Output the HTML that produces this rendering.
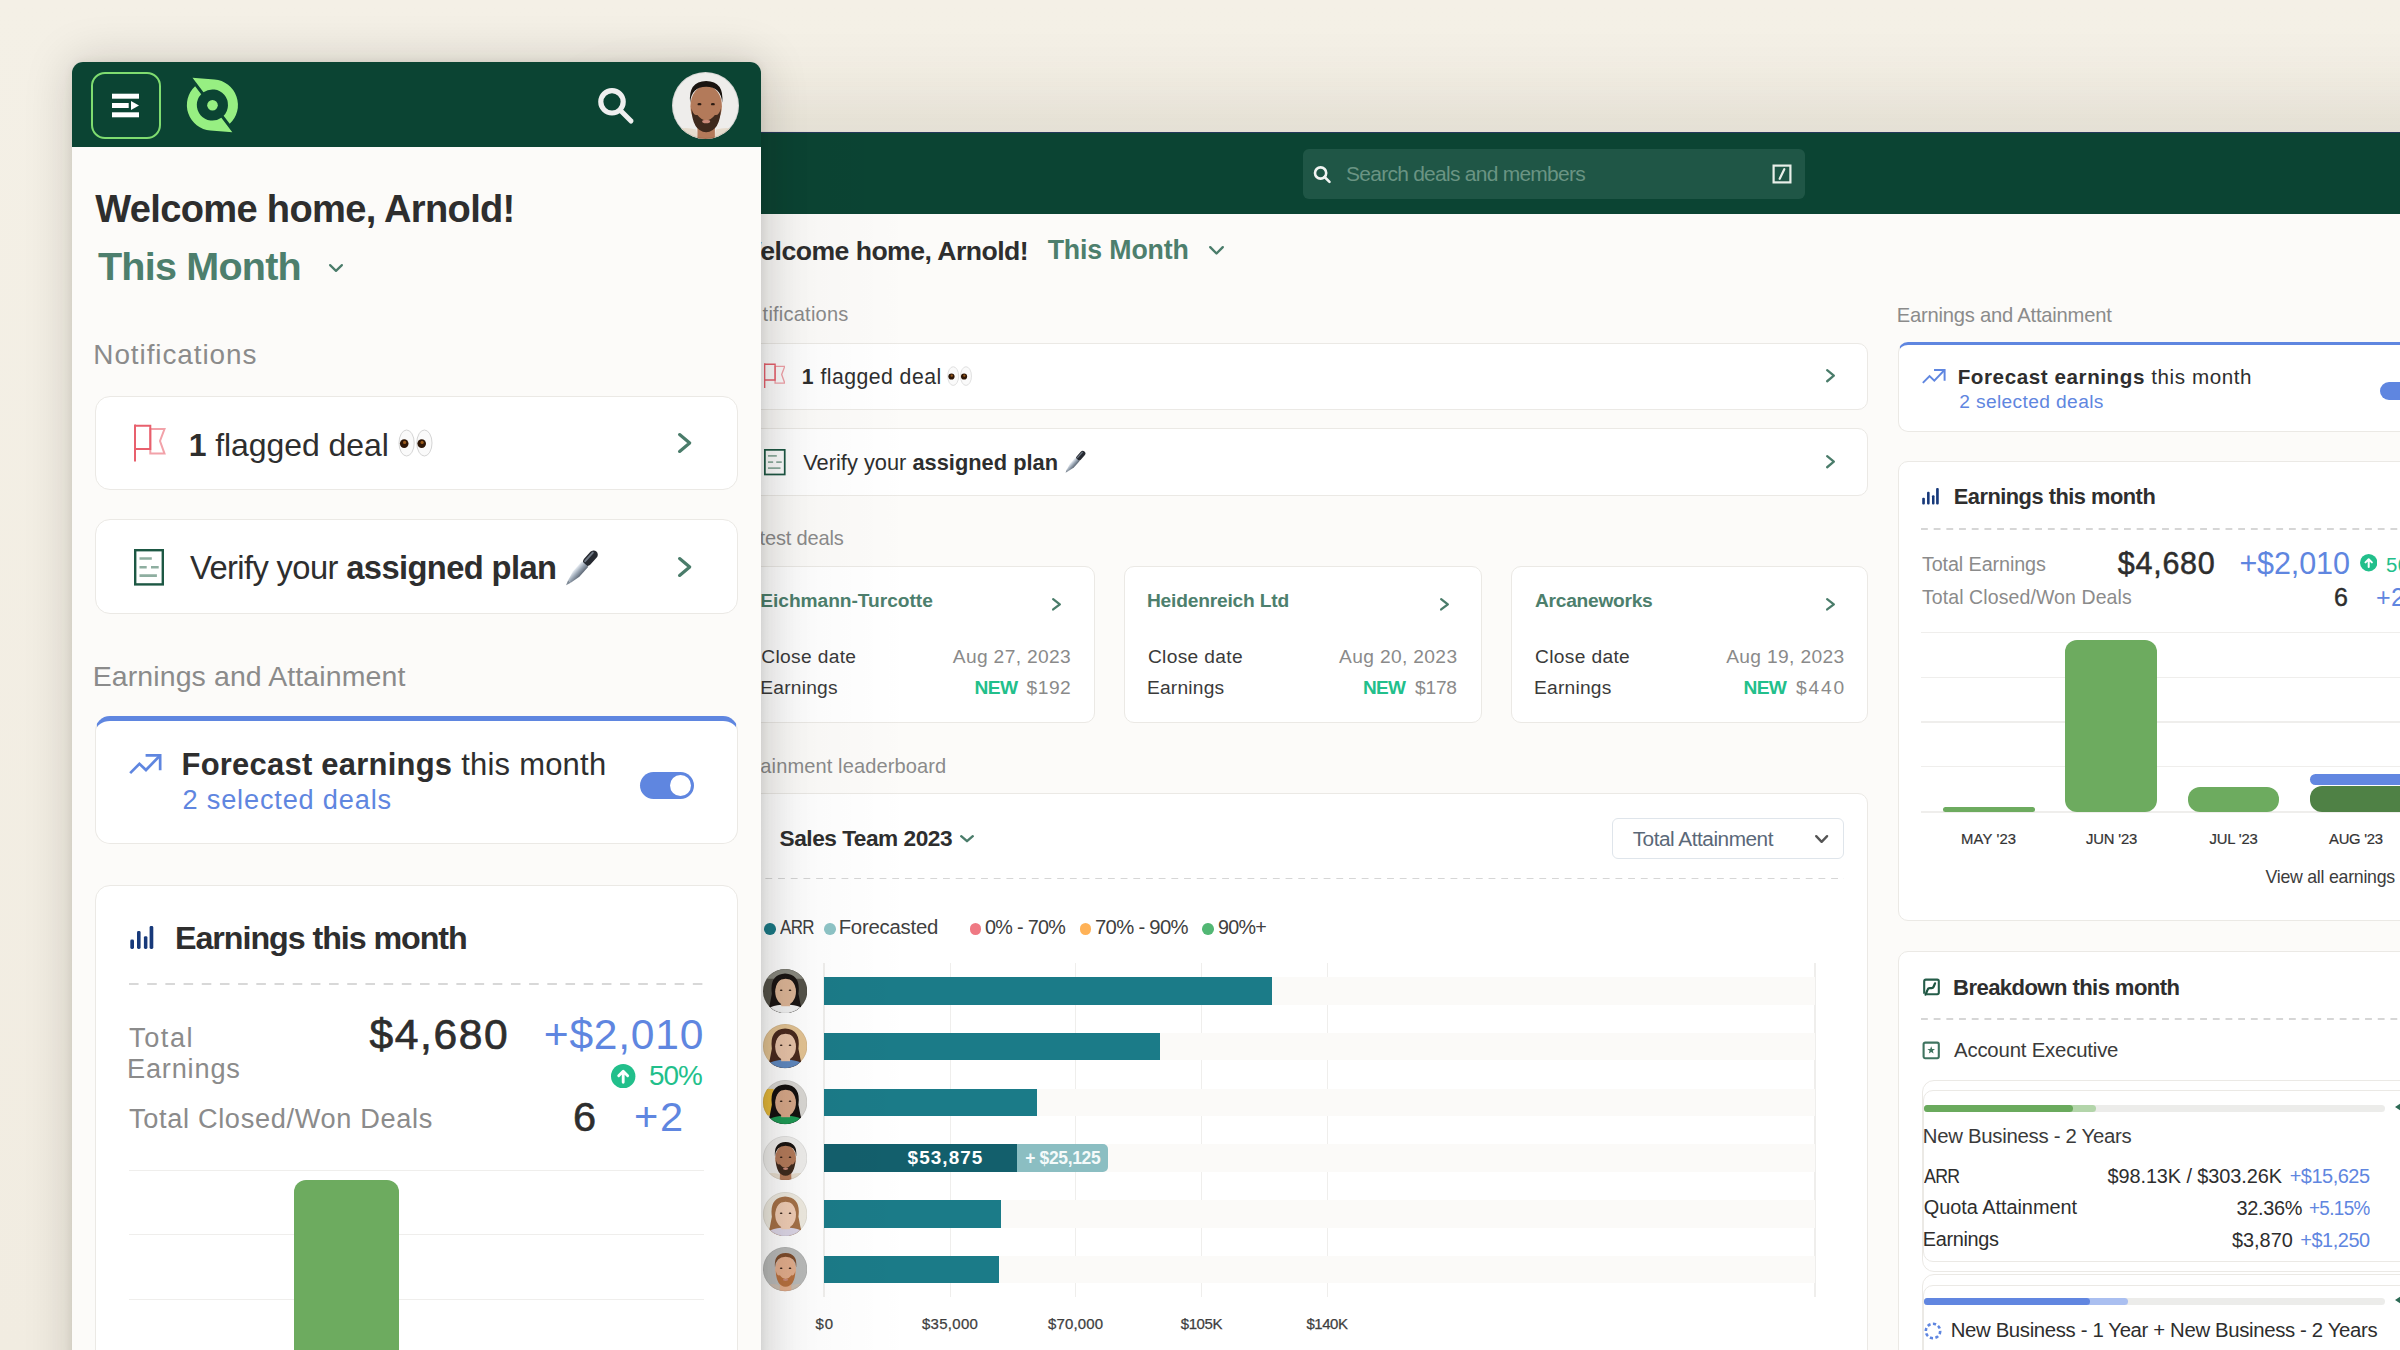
<!DOCTYPE html>
<html><head><meta charset="utf-8">
<style>
html,body{margin:0;padding:0}
body{width:2400px;height:1350px;overflow:hidden;position:relative;background:#f1ece2;font-family:"Liberation Sans",sans-serif}
.abs{position:absolute;display:block}
.t{position:absolute;white-space:nowrap;line-height:1}
.t b{font-weight:700}
#bg{position:absolute;left:0;top:0;width:2400px;height:1350px;background:linear-gradient(180deg,#f4f0e6 0%,#f1ece1 100%)}
#desk{position:absolute;left:0;top:0;width:2400px;height:1350px;overflow:hidden}
#mob{position:absolute;left:0;top:0;width:2400px;height:1350px;overflow:hidden}
</style></head><body>
<div id="bg"></div>
<div id="desk">
<div class="abs" style="left:600.00px;top:131.60px;width:2000.00px;height:82.60px;background:#0b4433;border-top:1px solid #23385a;box-sizing:border-box;box-shadow:0 -14px 90px rgba(70,55,30,0.15)"></div>
<div class="abs" style="left:600.00px;top:214.20px;width:2000.00px;height:1135.80px;background:#fcfbf9"></div>
<div class="abs" style="left:1303.00px;top:148.50px;width:502.00px;height:50.10px;background:#1f5646;border-radius:6px"></div>
<svg class="abs" style="left:1312px;top:164px;width:22px;height:22px" viewBox="0 0 22 22"><circle cx="8.6" cy="9" r="5.6" fill="none" stroke="#f2f5f3" stroke-width="2.6"/><path d="M12.6 13 L17.5 17.9" stroke="#f2f5f3" stroke-width="2.6" stroke-linecap="round"/></svg>
<svg class="abs" style="left:1772px;top:164px;width:20px;height:20px" viewBox="0 0 20 20"><rect x="1.6" y="1.6" width="16.8" height="16.8" fill="none" stroke="#e9efe9" stroke-width="2.2"/><path d="M12.3 5.2 L7.7 14.8" stroke="#e9efe9" stroke-width="2.2" stroke-linecap="round"/></svg>
<svg class="abs" style="left:1206px;top:243px;width:21px;height:14.699999999999989px;overflow:visible" viewBox="-3 -3 21 14.699999999999989"><path d="M1.2 1.2 L7.5 7.4999999999999885 L13.8 1.2" fill="none" stroke="#4a7c6a" stroke-width="2.4" stroke-linecap="round" stroke-linejoin="round"/></svg>
<div class="abs" style="left:700.00px;top:342.70px;width:1168.00px;height:66.90px;background:#fff;border:1.5px solid #ebe9e5;box-sizing:border-box;border-radius:10px"></div>
<div class="abs" style="left:700.00px;top:428.30px;width:1168.00px;height:67.30px;background:#fff;border:1.5px solid #ebe9e5;box-sizing:border-box;border-radius:10px"></div>
<svg class="abs" style="left:763.5px;top:362.5px;width:21.76px;height:25.840000000000003px" viewBox="0 0 32 38">
<path d="M16.3 5 H30.5 L26 17 L30.5 29.6 H16.3 Z" fill="none" stroke="#f2a2a9" stroke-width="2"/>
<path d="M1 1.8 H16.3 V25 H1" fill="none" stroke="#e8606d" stroke-width="2"/>
<path d="M1 0.5 V37.5" stroke="#e8606d" stroke-width="2"/>
</svg>
<svg class="abs" style="left:764px;top:449.2px;width:21.599999999999998px;height:26.64px" viewBox="0 0 30 37">
<rect x="1.2" y="1.2" width="27.6" height="34.2" fill="none" stroke="#1d5844" stroke-width="2.4"/>
<path d="M5.5 9.5 H17.8 M5.5 18.2 H12.7 M17 18.2 H24.7 M5.5 26.6 H22.9" stroke="#8eaea0" stroke-width="2.6"/>
</svg>
<svg class="abs" style="left:947px;top:366px;width:25.2px;height:20.16px" viewBox="0 0 35 28">
<ellipse cx="8.6" cy="14" rx="7.6" ry="13" fill="#fafafa" stroke="#d5d5d5" stroke-width="1"/>
<ellipse cx="26.4" cy="14" rx="7.6" ry="13" fill="#fafafa" stroke="#d5d5d5" stroke-width="1"/>
<circle cx="6.2" cy="14.6" r="4.3" fill="#2e1606"/><circle cx="23.7" cy="14.6" r="4.3" fill="#2e1606"/>
<circle cx="6.6" cy="13.4" r="1.6" fill="#9a5a1a"/><circle cx="24.1" cy="13.4" r="1.6" fill="#9a5a1a"/>
</svg>
<svg class="abs" style="left:1063px;top:449.5px;width:23.799999999999997px;height:24.5px;overflow:visible" viewBox="0 0 34 35">
<defs><linearGradient id="pg" x1="0" x2="1"><stop offset="0" stop-color="#e9eef4"/><stop offset="0.5" stop-color="#9aa6b4"/><stop offset="1" stop-color="#5d6774"/></linearGradient></defs>
<g transform="rotate(42 17 17.5)">
<rect x="13.2" y="-3" width="7.6" height="16" rx="3.8" fill="#262a31"/>
<rect x="14.4" y="-1" width="1.8" height="12" rx="0.9" fill="#6f7884"/>
<path d="M13.2 12 H20.8 V24 L18.6 33 H15.4 L13.2 24 Z" fill="url(#pg)"/>
<path d="M15.4 33 H18.6 L17 37.5 Z" fill="#7f8a96"/>
</g></svg>
<svg class="abs" style="left:1823.4px;top:366.3px;width:15.0px;height:19.399999999999977px;overflow:visible" viewBox="-3 -3 15.0 19.399999999999977"><path d="M1.15 1.15 L7.85 6.699999999999989 L1.15 12.249999999999977" fill="none" stroke="#4a7c6a" stroke-width="2.3" stroke-linecap="round" stroke-linejoin="round"/></svg>
<svg class="abs" style="left:1823.4px;top:452.3px;width:15.0px;height:19.399999999999977px;overflow:visible" viewBox="-3 -3 15.0 19.399999999999977"><path d="M1.15 1.15 L7.85 6.699999999999989 L1.15 12.249999999999977" fill="none" stroke="#4a7c6a" stroke-width="2.3" stroke-linecap="round" stroke-linejoin="round"/></svg>
<div class="abs" style="left:737.00px;top:566.40px;width:357.50px;height:156.30px;background:#fff;border:1.5px solid #ebe9e5;box-sizing:border-box;border-radius:10px"></div>
<div class="abs" style="left:1124.00px;top:566.40px;width:357.50px;height:156.30px;background:#fff;border:1.5px solid #ebe9e5;box-sizing:border-box;border-radius:10px"></div>
<div class="abs" style="left:1510.50px;top:566.40px;width:357.50px;height:156.30px;background:#fff;border:1.5px solid #ebe9e5;box-sizing:border-box;border-radius:10px"></div>
<svg class="abs" style="left:1048.5px;top:594.8px;width:15.0px;height:18.600000000000023px;overflow:visible" viewBox="-3 -3 15.0 18.600000000000023"><path d="M1.15 1.15 L7.85 6.300000000000011 L1.15 11.450000000000022" fill="none" stroke="#4a7c6a" stroke-width="2.3" stroke-linecap="round" stroke-linejoin="round"/></svg>
<svg class="abs" style="left:1436.6px;top:594.8px;width:15.0px;height:18.600000000000023px;overflow:visible" viewBox="-3 -3 15.0 18.600000000000023"><path d="M1.15 1.15 L7.85 6.300000000000011 L1.15 11.450000000000022" fill="none" stroke="#4a7c6a" stroke-width="2.3" stroke-linecap="round" stroke-linejoin="round"/></svg>
<svg class="abs" style="left:1823.4px;top:594.8px;width:15.0px;height:18.600000000000023px;overflow:visible" viewBox="-3 -3 15.0 18.600000000000023"><path d="M1.15 1.15 L7.85 6.300000000000011 L1.15 11.450000000000022" fill="none" stroke="#4a7c6a" stroke-width="2.3" stroke-linecap="round" stroke-linejoin="round"/></svg>
<div class="abs" style="left:700.00px;top:793.40px;width:1168.00px;height:606.60px;background:#fff;border:1.5px solid #ebe9e5;box-sizing:border-box;border-radius:10px"></div>
<svg class="abs" style="left:957px;top:832.3px;width:20px;height:13.400000000000091px;overflow:visible" viewBox="-3 -3 20 13.400000000000091"><path d="M1.2 1.2 L7.0 6.200000000000091 L12.8 1.2" fill="none" stroke="#4a7c6a" stroke-width="2.4" stroke-linecap="round" stroke-linejoin="round"/></svg>
<div class="abs" style="left:1612.40px;top:818.30px;width:231.60px;height:40.40px;border:1.5px solid #dfe5eb;border-radius:6px;box-sizing:border-box;background:#fff"></div>
<svg class="abs" style="left:1811.7px;top:831.7px;width:19.299999999999955px;height:14.0px;overflow:visible" viewBox="-3 -3 19.299999999999955 14.0"><path d="M1.2 1.2 L6.649999999999977 6.8 L12.099999999999955 1.2" fill="none" stroke="#555" stroke-width="2.4" stroke-linecap="round" stroke-linejoin="round"/></svg>
<div class="abs" style="left:740.00px;top:877.80px;width:1104.00px;height:1.50px;background-image:linear-gradient(90deg,#d6d6d6 0 6.5px,transparent 6.5px 12.7px);background-size:12.7px 1.5px"></div>
<div class="abs" style="left:764.00px;top:923.00px;width:11.60px;height:11.60px;background:#1a7a87;border-radius:50%"></div>
<div class="abs" style="left:824.40px;top:923.00px;width:11.60px;height:11.60px;background:#8ec4c6;border-radius:50%"></div>
<div class="abs" style="left:969.50px;top:923.00px;width:11.60px;height:11.60px;background:#ef7983;border-radius:50%"></div>
<div class="abs" style="left:1079.90px;top:923.00px;width:11.60px;height:11.60px;background:#ffb257;border-radius:50%"></div>
<div class="abs" style="left:1202.00px;top:923.00px;width:11.60px;height:11.60px;background:#52b774;border-radius:50%"></div>
<div class="abs" style="left:823.40px;top:962.50px;width:1.20px;height:334.70px;background:#efeeec"></div>
<div class="abs" style="left:949.60px;top:962.50px;width:1.20px;height:334.70px;background:#efeeec"></div>
<div class="abs" style="left:1075.30px;top:962.50px;width:1.20px;height:334.70px;background:#efeeec"></div>
<div class="abs" style="left:1201.00px;top:962.50px;width:1.20px;height:334.70px;background:#efeeec"></div>
<div class="abs" style="left:1326.70px;top:962.50px;width:1.20px;height:334.70px;background:#efeeec"></div>
<div class="abs" style="left:1814.40px;top:962.50px;width:1.20px;height:334.70px;background:#efeeec"></div>
<div class="abs" style="left:824.00px;top:977.00px;width:991.00px;height:27.60px;background:#fbfaf8"></div>
<div class="abs" style="left:824.00px;top:977.00px;width:447.70px;height:27.60px;background:#1b7b88"></div>
<div class="abs" style="left:824.00px;top:1032.80px;width:991.00px;height:27.60px;background:#fbfaf8"></div>
<div class="abs" style="left:824.00px;top:1032.80px;width:335.50px;height:27.60px;background:#1b7b88"></div>
<div class="abs" style="left:824.00px;top:1088.60px;width:991.00px;height:27.60px;background:#fbfaf8"></div>
<div class="abs" style="left:824.00px;top:1088.60px;width:213.20px;height:27.60px;background:#1b7b88"></div>
<div class="abs" style="left:824.00px;top:1144.20px;width:991.00px;height:27.60px;background:#fbfaf8"></div>
<div class="abs" style="left:824.00px;top:1200.10px;width:991.00px;height:27.60px;background:#fbfaf8"></div>
<div class="abs" style="left:824.00px;top:1200.10px;width:176.80px;height:27.60px;background:#1b7b88"></div>
<div class="abs" style="left:824.00px;top:1255.80px;width:991.00px;height:27.60px;background:#fbfaf8"></div>
<div class="abs" style="left:824.00px;top:1255.80px;width:174.80px;height:27.60px;background:#1b7b88"></div>
<div class="abs" style="left:1017.20px;top:1144.20px;width:90.70px;height:27.60px;background:#8bbec2;border-radius:0 5px 5px 0"></div>
<div class="abs" style="left:824.00px;top:1144.20px;width:193.20px;height:27.60px;background:#135f6c"></div>
<svg class="abs" style="left:762.8px;top:968.65px;width:44.3px;height:44.3px" viewBox="0 0 100 100">
<defs><clipPath id="c7628_9686"><circle cx="50" cy="50" r="50"/></clipPath></defs>
<g clip-path="url(#c7628_9686)"><rect width="100" height="100" fill="#55534a"/><rect x="0" y="0" width="100" height="22" fill="#8a8a80"/><path d="M20 56 Q14 12 50 10 Q86 12 80 56 Q84 80 90 100 L10 100 Q16 80 20 56Z" fill="#1b1614"/>
<path d="M4 100 Q8 82 51 80 Q94 82 98 100Z" fill="#f2f2f2"/><rect x="41" y="62" width="20" height="22" fill="#dcb596"/>
<ellipse cx="51" cy="51" rx="23.5" ry="31" fill="#dcb596"/><path d="M27 46 Q24 14 51 13.5 Q78 14 75 46 Q73 22 51 22 Q29 22 27 46Z" fill="#1b1614"/>
<ellipse cx="41" cy="48" rx="3" ry="1.8" fill="#2a1a12"/><ellipse cx="61" cy="48" rx="3" ry="1.8" fill="#2a1a12"/>
</g><circle cx="50" cy="50" r="49.2" fill="none" stroke="rgba(0,0,0,0.10)" stroke-width="1.4"/></svg>
<svg class="abs" style="left:762.8px;top:1024.4499999999998px;width:44.3px;height:44.3px" viewBox="0 0 100 100">
<defs><clipPath id="c7628_10244"><circle cx="50" cy="50" r="50"/></clipPath></defs>
<g clip-path="url(#c7628_10244)"><rect width="100" height="100" fill="#e3c393"/><path d="M20 56 Q14 12 50 10 Q86 12 80 56 Q84 80 90 100 L10 100 Q16 80 20 56Z" fill="#4a2a1e"/>
<path d="M4 100 Q8 82 51 80 Q94 82 98 100Z" fill="#5f88bf"/><rect x="41" y="62" width="20" height="22" fill="#e8c3a8"/>
<ellipse cx="51" cy="51" rx="23.5" ry="31" fill="#e8c3a8"/><path d="M27 46 Q24 14 51 13.5 Q78 14 75 46 Q73 22 51 22 Q29 22 27 46Z" fill="#4a2a1e"/>
<ellipse cx="41" cy="48" rx="3" ry="1.8" fill="#2a1a12"/><ellipse cx="61" cy="48" rx="3" ry="1.8" fill="#2a1a12"/>
</g><circle cx="50" cy="50" r="49.2" fill="none" stroke="rgba(0,0,0,0.10)" stroke-width="1.4"/></svg>
<svg class="abs" style="left:762.8px;top:1080.2499999999998px;width:44.3px;height:44.3px" viewBox="0 0 100 100">
<defs><clipPath id="c7628_10802"><circle cx="50" cy="50" r="50"/></clipPath></defs>
<g clip-path="url(#c7628_10802)"><rect width="100" height="100" fill="#d9d7d3"/><rect x="0" y="20" width="24" height="60" fill="#e5b83a"/><path d="M20 56 Q14 12 50 10 Q86 12 80 56 Q84 80 90 100 L10 100 Q16 80 20 56Z" fill="#15110f"/>
<path d="M4 100 Q8 82 51 80 Q94 82 98 100Z" fill="#1e9a55"/><rect x="41" y="62" width="20" height="22" fill="#d6a788"/>
<ellipse cx="51" cy="51" rx="23.5" ry="31" fill="#d6a788"/><path d="M27 46 Q24 14 51 13.5 Q78 14 75 46 Q73 22 51 22 Q29 22 27 46Z" fill="#15110f"/>
<ellipse cx="41" cy="48" rx="3" ry="1.8" fill="#2a1a12"/><ellipse cx="61" cy="48" rx="3" ry="1.8" fill="#2a1a12"/>
</g><circle cx="50" cy="50" r="49.2" fill="none" stroke="rgba(0,0,0,0.10)" stroke-width="1.4"/></svg>
<svg class="abs" style="left:762.8px;top:1135.85px;width:44.3px;height:44.3px" viewBox="0 0 100 100">
<defs><clipPath id="c7628_11358"><circle cx="50" cy="50" r="50"/></clipPath></defs>
<g clip-path="url(#c7628_11358)"><rect width="100" height="100" fill="#eeedeb"/>
<path d="M0 100 V88 Q18 80 36 86 L40 100Z M100 100 V88 Q84 80 66 86 L62 100Z" fill="#e6dccd"/><rect x="38" y="66" width="26" height="40" fill="#b37a5a"/>
<ellipse cx="51" cy="51" rx="23.5" ry="31" fill="#b37a5a"/><path d="M29 54 Q30 88 51 90 Q72 88 73 54 Q70 66 64 64 Q58 72 51 72 Q44 72 38 64 Q32 66 29 54Z" fill="#3e2a1e"/><ellipse cx="51" cy="74" rx="6" ry="2.6" fill="#c98a7a"/><path d="M27 46 Q24 14 51 13.5 Q78 14 75 46 Q73 22 51 22 Q29 22 27 46Z" fill="#1a1410"/>
<ellipse cx="41" cy="48" rx="3" ry="1.8" fill="#2a1a12"/><ellipse cx="61" cy="48" rx="3" ry="1.8" fill="#2a1a12"/>
</g><circle cx="50" cy="50" r="49.2" fill="none" stroke="rgba(0,0,0,0.10)" stroke-width="1.4"/></svg>
<svg class="abs" style="left:762.8px;top:1191.7499999999998px;width:44.3px;height:44.3px" viewBox="0 0 100 100">
<defs><clipPath id="c7628_11917"><circle cx="50" cy="50" r="50"/></clipPath></defs>
<g clip-path="url(#c7628_11917)"><rect width="100" height="100" fill="#eeeae0"/><path d="M20 56 Q14 12 50 10 Q86 12 80 56 Q84 80 90 100 L10 100 Q16 80 20 56Z" fill="#a57148"/>
<path d="M4 100 Q8 82 51 80 Q94 82 98 100Z" fill="#dcd6e6"/><rect x="41" y="62" width="20" height="22" fill="#f0cdb5"/>
<ellipse cx="51" cy="51" rx="23.5" ry="31" fill="#f0cdb5"/><path d="M27 46 Q24 14 51 13.5 Q78 14 75 46 Q73 22 51 22 Q29 22 27 46Z" fill="#a57148"/>
<ellipse cx="41" cy="48" rx="3" ry="1.8" fill="#2a1a12"/><ellipse cx="61" cy="48" rx="3" ry="1.8" fill="#2a1a12"/>
</g><circle cx="50" cy="50" r="49.2" fill="none" stroke="rgba(0,0,0,0.10)" stroke-width="1.4"/></svg>
<svg class="abs" style="left:762.8px;top:1247.4499999999998px;width:44.3px;height:44.3px" viewBox="0 0 100 100">
<defs><clipPath id="c7628_12474"><circle cx="50" cy="50" r="50"/></clipPath></defs>
<g clip-path="url(#c7628_12474)"><rect width="100" height="100" fill="#b9bab9"/>
<path d="M0 100 V88 Q18 80 36 86 L40 100Z M100 100 V88 Q84 80 66 86 L62 100Z" fill="#c9bcb0"/><rect x="38" y="66" width="26" height="40" fill="#e2ad8c"/>
<ellipse cx="51" cy="51" rx="23.5" ry="31" fill="#e2ad8c"/><path d="M29 54 Q30 88 51 90 Q72 88 73 54 Q70 66 64 64 Q58 72 51 72 Q44 72 38 64 Q32 66 29 54Z" fill="#b7703f"/><ellipse cx="51" cy="74" rx="6" ry="2.6" fill="#c98a7a"/><path d="M27 46 Q24 14 51 13.5 Q78 14 75 46 Q73 22 51 22 Q29 22 27 46Z" fill="#7d4c2c"/>
<ellipse cx="41" cy="48" rx="3" ry="1.8" fill="#2a1a12"/><ellipse cx="61" cy="48" rx="3" ry="1.8" fill="#2a1a12"/>
</g><circle cx="50" cy="50" r="49.2" fill="none" stroke="rgba(0,0,0,0.10)" stroke-width="1.4"/></svg>
<div class="abs" style="left:1897.70px;top:342.30px;width:532.30px;height:89.30px;background:#fff;border:1.5px solid #ebe9e5;border-top:3px solid #5f86e0;box-sizing:border-box;border-radius:10px"></div>
<svg class="abs" style="left:1921.5px;top:368.8px;width:23.799999999999997px;height:14.7px;overflow:visible" viewBox="0 0 34 21">
<path d="M1.2 19.8 L10.8 10.2 L17.6 16.6 L32.2 1.5" fill="none" stroke="#5f86e0" stroke-width="2.8" stroke-linejoin="miter"/>
<path d="M17.2 1.5 H32.3 V16.8" fill="none" stroke="#5f86e0" stroke-width="2.8"/>
</svg>
<div class="abs" style="left:2380.00px;top:381.80px;width:50.00px;height:18.70px;background:#5f86e0;border-radius:10px"></div>
<div class="abs" style="left:1897.70px;top:460.60px;width:532.30px;height:460.40px;background:#fff;border:1.5px solid #ebe9e5;box-sizing:border-box;border-radius:10px"></div>
<svg class="abs" style="left:1922px;top:488px;width:17.28px;height:16.56px" viewBox="0 0 24 23">
<rect x="0.3" y="13.6" width="3.7" height="9.4" rx="1.4" fill="#17397a"/>
<rect x="7" y="5.1" width="3.6" height="17.9" rx="1.4" fill="#17397a"/>
<rect x="13.9" y="10.2" width="3.5" height="12.8" rx="1.4" fill="#17397a"/>
<rect x="19.6" y="0" width="3.7" height="23" rx="1.4" fill="#17397a"/>
</svg>
<div class="abs" style="left:1921.30px;top:528.00px;width:478.70px;height:1.50px;background-image:linear-gradient(90deg,#d6d6d6 0 6.5px,transparent 6.5px 12.7px);background-size:12.7px 1.5px"></div>
<svg class="abs" style="left:2360px;top:554.4px;width:17.4px;height:17.4px" viewBox="0 0 24 24">
<circle cx="12" cy="12" r="12" fill="#22bf8b"/>
<path d="M12 18 V7.5 M7.6 11.6 L12 7.2 L16.4 11.6" fill="none" stroke="#fff" stroke-width="2.8" stroke-linecap="round" stroke-linejoin="round"/>
</svg>
<div class="abs" style="left:1921.20px;top:631.50px;width:478.80px;height:1.20px;background:#efeeec"></div>
<div class="abs" style="left:1921.20px;top:676.80px;width:478.80px;height:1.20px;background:#efeeec"></div>
<div class="abs" style="left:1921.20px;top:721.40px;width:478.80px;height:1.20px;background:#efeeec"></div>
<div class="abs" style="left:1921.20px;top:766.00px;width:478.80px;height:1.20px;background:#efeeec"></div>
<div class="abs" style="left:1921.20px;top:811.40px;width:478.80px;height:1.20px;background:#efeeec"></div>
<div class="abs" style="left:1943.00px;top:806.60px;width:91.60px;height:5.20px;background:#6dab5f;border-radius:3px"></div>
<div class="abs" style="left:2065.30px;top:640.20px;width:91.40px;height:171.80px;background:#6dab5f;border-radius:12px"></div>
<div class="abs" style="left:2187.50px;top:786.80px;width:91.40px;height:25.20px;background:#6dab5f;border-radius:12px"></div>
<div class="abs" style="left:2309.60px;top:774.00px;width:120.40px;height:11.00px;background:#6287e1;border-radius:6px"></div>
<div class="abs" style="left:2309.60px;top:785.70px;width:120.40px;height:26.30px;background:#4f8145;border-radius:12px"></div>
<div class="abs" style="left:1897.70px;top:950.60px;width:532.30px;height:449.40px;background:#fff;border:1.5px solid #ebe9e5;box-sizing:border-box;border-radius:10px"></div>
<svg class="abs" style="left:1920.5px;top:977px;width:20px;height:20px" viewBox="0 0 20 20"><path d="M3.2 16.8 V4.2 Q3.2 2.6 4.8 2.6 H16.2 Q17.8 2.6 17.8 4.2 V15.6 Q17.8 17.3 16.2 17.3 H5.5" fill="none" stroke="#245c49" stroke-width="2.1"/><path d="M4.6 17.6 L6.6 12.6 Q7.1 11.2 8.8 11.2 H10.6 Q12 11.2 12.6 9.8 L14 6.4" fill="none" stroke="#1d5441" stroke-width="2.3" stroke-linecap="round"/></svg>
<div class="abs" style="left:1921.30px;top:1018.30px;width:478.70px;height:1.50px;background-image:linear-gradient(90deg,#d6d6d6 0 6.5px,transparent 6.5px 12.7px);background-size:12.7px 1.5px"></div>
<svg class="abs" style="left:1920.5px;top:1039.5px;width:20px;height:20px" viewBox="0 0 20 20"><rect x="2.6" y="2.6" width="15.2" height="15.6" rx="1.6" fill="none" stroke="#3f7460" stroke-width="2.1"/><path d="M10.2 6.3 L11.2 9 L14 9.1 L11.8 10.8 L12.6 13.5 L10.2 11.9 L7.8 13.5 L8.6 10.8 L6.4 9.1 L9.2 9Z" fill="#3f7460"/></svg>
<div class="abs" style="left:1921.60px;top:1079.70px;width:508.40px;height:191.90px;border:1.5px solid #ebe9e5;box-sizing:border-box;border-radius:12px;background:#fff"></div>
<div class="abs" style="left:1923.00px;top:1090.30px;width:507.00px;height:171.70px;border:1.5px solid #ebe9e5;box-sizing:border-box;border-radius:10px;background:#fff"></div>
<div class="abs" style="left:1923.80px;top:1105.00px;width:460.90px;height:6.60px;background:#ececea;border-radius:4px"></div>
<div class="abs" style="left:1923.80px;top:1105.00px;width:172.50px;height:6.60px;background:#b3d5aa;border-radius:4px"></div>
<div class="abs" style="left:1923.80px;top:1105.00px;width:148.80px;height:6.60px;background:#6aaa5d;border-radius:4px"></div>
<div class="abs" style="left:1921.60px;top:1274.00px;width:508.40px;height:126.00px;border:1.5px solid #ebe9e5;box-sizing:border-box;border-radius:12px;background:#fff"></div>
<div class="abs" style="left:1923.00px;top:1284.70px;width:507.00px;height:115.30px;border:1.5px solid #ebe9e5;box-sizing:border-box;border-radius:10px;background:#fff"></div>
<div class="abs" style="left:1923.80px;top:1298.30px;width:460.90px;height:7.00px;background:#ececea;border-radius:4px"></div>
<div class="abs" style="left:1923.80px;top:1298.30px;width:204.20px;height:7.00px;background:#aabff0;border-radius:4px"></div>
<div class="abs" style="left:1923.80px;top:1298.30px;width:166.10px;height:7.00px;background:#6186e0;border-radius:4px"></div>
<svg class="abs" style="left:1923px;top:1321px;width:20px;height:20px" viewBox="0 0 20 20"><circle cx="10" cy="10" r="7.2" fill="none" stroke="#5f86e0" stroke-width="2.6" stroke-dasharray="3.2 2.4"/></svg>
<svg class="abs" style="left:2394px;top:1102px;width:8px;height:10px" viewBox="0 0 8 10"><path d="M1 5 L7 1 V9Z" fill="#2d6a55"/></svg>
<svg class="abs" style="left:2394px;top:1295px;width:8px;height:10px" viewBox="0 0 8 10"><path d="M1 5 L7 1 V9Z" fill="#2d6a55"/></svg>
<div class="t" style="left:1345.80px;top:162.66px;font-size:21.08px;letter-spacing:-0.738px;color:#6a9483;transform:scaleX(0.9956);transform-origin:0 0;">Search deals and members</div>
<div class="t" style="left:736.24px;top:237.98px;font-size:26.60px;letter-spacing:-0.529px;color:#2e2e2e;"><b>W</b><b>elcome home, Arnold!</b></div>
<div class="t" style="left:1047.70px;top:236.86px;font-size:26.74px;letter-spacing:-0.158px;color:#4d7f6d;"><b>This Month</b></div>
<div class="t" style="left:762.60px;top:304.32px;font-size:20.06px;letter-spacing:0.216px;color:#8b8b8b;">tifications</div>
<div class="t" style="left:801.80px;top:366.14px;font-size:21.22px;letter-spacing:0.461px;color:#2e2e2e;"><b>1</b> flagged deal</div>
<div class="t" style="left:803.20px;top:451.84px;font-size:21.80px;letter-spacing:0.018px;color:#2e2e2e;">Verify your <b>assigned plan</b></div>
<div class="t" style="left:737.70px;top:528.02px;font-size:20.06px;letter-spacing:-0.189px;color:#8b8b8b;">Latest deals</div>
<div class="t" style="left:760.25px;top:591.16px;font-size:19.19px;letter-spacing:-0.053px;color:#4d7f6d;"><b>Eichmann-Turcotte</b></div>
<div class="t" style="left:761.25px;top:646.86px;font-size:19.19px;letter-spacing:0.334px;color:#3a3a3a;">Close date</div>
<div class="t" style="left:952.75px;top:646.86px;font-size:19.19px;letter-spacing:0.350px;color:#8a8a8a;">Aug 27, 2023</div>
<div class="t" style="left:760.25px;top:678.26px;font-size:19.19px;letter-spacing:0.217px;color:#3a3a3a;">Earnings</div>
<div class="t" style="left:974.40px;top:678.26px;font-size:19.19px;letter-spacing:-0.566px;color:#22bf8b;"><b>NEW</b></div>
<div class="t" style="left:1026.60px;top:678.26px;font-size:19.19px;letter-spacing:0.471px;color:#8a8a8a;">$192</div>
<div class="t" style="left:1146.90px;top:591.16px;font-size:19.19px;letter-spacing:-0.197px;color:#4d7f6d;"><b>Heidenreich Ltd</b></div>
<div class="t" style="left:1147.90px;top:646.86px;font-size:19.19px;letter-spacing:0.334px;color:#3a3a3a;">Close date</div>
<div class="t" style="left:1339.05px;top:646.86px;font-size:19.19px;letter-spacing:0.350px;color:#8a8a8a;">Aug 20, 2023</div>
<div class="t" style="left:1146.90px;top:678.26px;font-size:19.19px;letter-spacing:0.217px;color:#3a3a3a;">Earnings</div>
<div class="t" style="left:1362.51px;top:678.26px;font-size:19.19px;letter-spacing:-0.672px;color:#22bf8b;transform:scaleX(0.9910);transform-origin:0 0;"><b>NEW</b></div>
<div class="t" style="left:1415.00px;top:678.26px;font-size:19.19px;letter-spacing:-0.229px;color:#8a8a8a;">$178</div>
<div class="t" style="left:1535.00px;top:591.16px;font-size:19.19px;letter-spacing:-0.275px;color:#4d7f6d;"><b>Arcaneworks</b></div>
<div class="t" style="left:1535.00px;top:646.86px;font-size:19.19px;letter-spacing:0.334px;color:#3a3a3a;">Close date</div>
<div class="t" style="left:1726.15px;top:646.86px;font-size:19.19px;letter-spacing:0.350px;color:#8a8a8a;">Aug 19, 2023</div>
<div class="t" style="left:1534.00px;top:678.26px;font-size:19.19px;letter-spacing:0.217px;color:#3a3a3a;">Earnings</div>
<div class="t" style="left:1743.40px;top:678.26px;font-size:19.19px;letter-spacing:-0.616px;color:#22bf8b;"><b>NEW</b></div>
<div class="t" style="left:1796.00px;top:678.26px;font-size:19.19px;letter-spacing:1.804px;color:#8a8a8a;">$440</div>
<div class="t" style="left:735.51px;top:755.82px;font-size:20.06px;letter-spacing:0.107px;color:#8b8b8b;">Attainment leaderboard</div>
<div class="t" style="left:779.60px;top:827.31px;font-size:22.67px;letter-spacing:-0.486px;color:#2e2e2e;"><b>Sales Team 2023</b></div>
<div class="t" style="left:1632.70px;top:828.51px;font-size:20.79px;letter-spacing:-0.475px;color:#5a6878;">Total Attainment</div>
<div class="t" style="left:780.00px;top:917.27px;font-size:20.35px;letter-spacing:-0.712px;color:#404040;transform:scaleX(0.8330);transform-origin:0 0;">ARR</div>
<div class="t" style="left:838.70px;top:917.27px;font-size:20.35px;letter-spacing:-0.243px;color:#404040;">Forecasted</div>
<div class="t" style="left:985.30px;top:917.27px;font-size:20.35px;letter-spacing:-0.712px;color:#404040;transform:scaleX(0.9715);transform-origin:0 0;">0% - 70%</div>
<div class="t" style="left:1094.60px;top:917.27px;font-size:20.35px;letter-spacing:-0.712px;color:#404040;transform:scaleX(0.9971);transform-origin:0 0;">70% - 90%</div>
<div class="t" style="left:1218.20px;top:917.27px;font-size:20.35px;letter-spacing:-0.712px;color:#404040;transform:scaleX(0.9687);transform-origin:0 0;">90%+</div>
<div class="t" style="left:907.60px;top:1149.10px;font-size:18.90px;letter-spacing:1.078px;color:#ffffff;"><b>$53,875</b></div>
<div class="t" style="left:1025.20px;top:1149.94px;font-size:17.44px;letter-spacing:-0.320px;color:#f4fafa;"><b>+ $25,125</b></div>
<div class="t" style="left:815.60px;top:1317.03px;font-size:14.97px;letter-spacing:0.775px;color:#3e3e3e;-webkit-text-stroke:0.25px #3e3e3e;">$0</div>
<div class="t" style="left:922.00px;top:1317.03px;font-size:14.97px;letter-spacing:0.286px;color:#3e3e3e;-webkit-text-stroke:0.25px #3e3e3e;">$35,000</div>
<div class="t" style="left:1048.00px;top:1317.03px;font-size:14.97px;letter-spacing:0.169px;color:#3e3e3e;-webkit-text-stroke:0.25px #3e3e3e;">$70,000</div>
<div class="t" style="left:1180.80px;top:1317.03px;font-size:14.97px;letter-spacing:-0.425px;color:#3e3e3e;-webkit-text-stroke:0.25px #3e3e3e;">$105K</div>
<div class="t" style="left:1306.50px;top:1317.03px;font-size:14.97px;letter-spacing:-0.450px;color:#3e3e3e;-webkit-text-stroke:0.25px #3e3e3e;">$140K</div>
<div class="t" style="left:1896.70px;top:305.00px;font-size:20.20px;letter-spacing:-0.221px;color:#8b8b8b;">Earnings and Attainment</div>
<div class="t" style="left:1957.70px;top:366.53px;font-size:20.64px;letter-spacing:0.564px;color:#2e2e2e;"><b>Forecast earnings</b> this month</div>
<div class="t" style="left:1959.20px;top:391.76px;font-size:19.19px;letter-spacing:0.369px;color:#5f86e0;">2 selected deals</div>
<div class="t" style="left:1953.70px;top:486.04px;font-size:21.80px;letter-spacing:-0.483px;color:#2e2e2e;"><b>Earnings this month</b></div>
<div class="t" style="left:1921.90px;top:554.97px;font-size:19.77px;letter-spacing:-0.098px;color:#8b8b8b;">Total Earnings</div>
<div class="t" style="left:2117.80px;top:547.96px;font-size:30.52px;letter-spacing:0.727px;color:#2e2e2e;-webkit-text-stroke:0.5px #2c2c2c;">$4,680</div>
<div class="t" style="left:2239.40px;top:547.96px;font-size:30.52px;letter-spacing:-0.114px;color:#5f86e0;">+$2,010</div>
<div class="t" style="left:2386.00px;top:554.77px;font-size:20.35px;letter-spacing:0.500px;color:#22bf8b;">50%</div>
<div class="t" style="left:1921.90px;top:588.01px;font-size:19.48px;letter-spacing:0.116px;color:#8b8b8b;">Total Closed/Won Deals</div>
<div class="t" style="left:2334.00px;top:585.34px;font-size:25.00px;letter-spacing:0.000px;color:#2e2e2e;-webkit-text-stroke:0.4px #2c2c2c;">6</div>
<div class="t" style="left:2376.00px;top:585.34px;font-size:25.00px;letter-spacing:0.500px;color:#5f86e0;">+2</div>
<div class="t" style="left:1961.00px;top:831.95px;font-size:14.83px;letter-spacing:0.137px;color:#333333;-webkit-text-stroke:0.2px #333333;">MAY &#x27;23</div>
<div class="t" style="left:2086.00px;top:831.95px;font-size:14.83px;letter-spacing:-0.164px;color:#333333;-webkit-text-stroke:0.2px #333333;">JUN &#x27;23</div>
<div class="t" style="left:2209.40px;top:831.95px;font-size:14.83px;letter-spacing:-0.154px;color:#333333;-webkit-text-stroke:0.2px #333333;">JUL &#x27;23</div>
<div class="t" style="left:2329.00px;top:831.95px;font-size:14.83px;letter-spacing:-0.263px;color:#333333;-webkit-text-stroke:0.2px #333333;">AUG &#x27;23</div>
<div class="t" style="left:2265.50px;top:869.49px;font-size:17.73px;letter-spacing:-0.248px;color:#3c3c3c;">View all earnings</div>
<div class="t" style="left:1953.10px;top:976.50px;font-size:22.09px;letter-spacing:-0.583px;color:#2e2e2e;"><b>Breakdown this month</b></div>
<div class="t" style="left:1954.00px;top:1039.57px;font-size:20.35px;letter-spacing:-0.183px;color:#3a3a3a;">Account Executive</div>
<div class="t" style="left:1922.80px;top:1126.17px;font-size:20.35px;letter-spacing:-0.280px;color:#3a3a3a;">New Business - 2 Years</div>
<div class="t" style="left:1923.80px;top:1166.64px;font-size:19.91px;letter-spacing:-0.697px;color:#2e2e2e;transform:scaleX(0.8892);transform-origin:0 0;">ARR</div>
<div class="t" style="left:2107.50px;top:1166.64px;font-size:19.91px;letter-spacing:-0.089px;color:#2e2e2e;">$98.13K / $303.26K</div>
<div class="t" style="left:2289.70px;top:1166.64px;font-size:19.91px;letter-spacing:-0.459px;color:#5f86e0;">+$15,625</div>
<div class="t" style="left:1923.80px;top:1198.44px;font-size:19.91px;letter-spacing:-0.039px;color:#2e2e2e;">Quota Attainment</div>
<div class="t" style="left:2236.60px;top:1199.14px;font-size:19.91px;letter-spacing:-0.323px;color:#2e2e2e;">32.36%</div>
<div class="t" style="left:2309.40px;top:1199.14px;font-size:19.91px;letter-spacing:-0.697px;color:#5f86e0;transform:scaleX(0.9486);transform-origin:0 0;">+5.15%</div>
<div class="t" style="left:1922.80px;top:1230.34px;font-size:19.91px;letter-spacing:-0.345px;color:#2e2e2e;">Earnings</div>
<div class="t" style="left:2232.00px;top:1231.14px;font-size:19.91px;letter-spacing:-0.023px;color:#2e2e2e;">$3,870</div>
<div class="t" style="left:2300.30px;top:1231.14px;font-size:19.91px;letter-spacing:-0.457px;color:#5f86e0;">+$1,250</div>
<div class="t" style="left:1950.70px;top:1320.47px;font-size:20.35px;letter-spacing:-0.352px;color:#2e2e2e;">New Business - 1 Year + New Business - 2 Years</div>
</div>
<div id="mob">
<div class="abs" style="left:761.00px;top:131.00px;width:160.00px;height:1219.00px;background:linear-gradient(90deg,rgba(0,0,0,0.05) 0px,rgba(0,0,0,0.035) 22px,rgba(0,0,0,0.016) 60px,rgba(0,0,0,0.006) 100px,rgba(0,0,0,0) 150px)"></div>
<div class="abs" style="left:72.00px;top:62.00px;width:689.00px;height:1338.00px;background:#fcfbf9;border-radius:11px 11px 0 0;box-shadow:0 0 48px rgba(20,16,8,0.18), 0 0 10px rgba(20,16,8,0.07)"></div>
<div class="abs" style="left:72.00px;top:62.00px;width:689.00px;height:85.00px;background:#0b4433;border-radius:11px 11px 0 0"></div>
<div class="abs" style="left:90.50px;top:72.00px;width:70.50px;height:67.00px;border:2px solid #7fdc70;border-radius:14px;box-sizing:border-box"></div>
<svg class="abs" style="left:110px;top:92px;width:32px;height:28px" viewBox="0 0 32 28"><path d="M2 4.2 H29" stroke="#fff" stroke-width="5"/><path d="M2 13.5 H18.7" stroke="#fff" stroke-width="5"/><path d="M2 22.8 H29" stroke="#fff" stroke-width="5"/><path d="M21 9 L29 13.5 L21 18 Z" fill="#fff"/></svg>
<svg class="abs" style="left:180px;top:72px;width:64px;height:64px" viewBox="0 0 64 64">
<path d="M52.3 60.2 L30.35 58.42 A25.5 25.5 0 0 1 15.12 14.22 L21.19 22.28 A15.5 15.5 0 0 0 41.33 45.68 Z" fill="#97ef82"/>
<path d="M52.3 60.2 L30.35 58.42 A25.5 25.5 0 0 1 15.12 14.22 L21.19 22.28 A15.5 15.5 0 0 0 41.33 45.68 Z" fill="#97ef82" transform="rotate(180 32.4 33)"/>
<circle cx="32.5" cy="33.2" r="5.3" fill="#97ef82"/>
</svg>
<svg class="abs" style="left:592px;top:82px;width:44px;height:44px" viewBox="0 0 44 44"><circle cx="20" cy="19.8" r="11.2" fill="none" stroke="#efefef" stroke-width="5.2"/><path d="M28.5 28.5 L39 39" stroke="#efefef" stroke-width="5" stroke-linecap="round"/></svg>
<svg class="abs" style="left:672px;top:72px;width:67px;height:67px" viewBox="0 0 100 100">
<defs><clipPath id="c6720_720"><circle cx="50" cy="50" r="50"/></clipPath></defs>
<g clip-path="url(#c6720_720)"><rect width="100" height="100" fill="#eeedeb"/>
<path d="M0 100 V88 Q18 80 36 86 L40 100Z M100 100 V88 Q84 80 66 86 L62 100Z" fill="#e6dccd"/><rect x="38" y="66" width="26" height="40" fill="#b37a5a"/>
<ellipse cx="51" cy="51" rx="23.5" ry="31" fill="#b37a5a"/><path d="M29 54 Q30 88 51 90 Q72 88 73 54 Q70 66 64 64 Q58 72 51 72 Q44 72 38 64 Q32 66 29 54Z" fill="#3e2a1e"/><ellipse cx="51" cy="74" rx="6" ry="2.6" fill="#c98a7a"/><path d="M27 46 Q24 14 51 13.5 Q78 14 75 46 Q73 22 51 22 Q29 22 27 46Z" fill="#1a1410"/>
<ellipse cx="41" cy="48" rx="3" ry="1.8" fill="#2a1a12"/><ellipse cx="61" cy="48" rx="3" ry="1.8" fill="#2a1a12"/>
</g><circle cx="50" cy="50" r="49.2" fill="none" stroke="rgba(0,0,0,0.10)" stroke-width="1.4"/></svg>
<svg class="abs" style="left:326px;top:261px;width:20px;height:14px;overflow:visible" viewBox="-3 -3 20 14"><path d="M1.1 1.1 L7.0 6.9 L12.9 1.1" fill="none" stroke="#4a7c6a" stroke-width="2.2" stroke-linecap="round" stroke-linejoin="round"/></svg>
<div class="abs" style="left:94.80px;top:395.70px;width:643.20px;height:94.80px;background:#fff;border:1.5px solid #ebe9e5;box-sizing:border-box;border-radius:15px"></div>
<div class="abs" style="left:94.80px;top:519.30px;width:643.20px;height:94.70px;background:#fff;border:1.5px solid #ebe9e5;box-sizing:border-box;border-radius:15px"></div>
<svg class="abs" style="left:133.5px;top:424px;width:32.0px;height:38.0px" viewBox="0 0 32 38">
<path d="M16.3 5 H30.5 L26 17 L30.5 29.6 H16.3 Z" fill="none" stroke="#f2a2a9" stroke-width="2"/>
<path d="M1 1.8 H16.3 V25 H1" fill="none" stroke="#e8606d" stroke-width="2"/>
<path d="M1 0.5 V37.5" stroke="#e8606d" stroke-width="2"/>
</svg>
<svg class="abs" style="left:134px;top:548.5px;width:30.0px;height:37.0px" viewBox="0 0 30 37">
<rect x="1.2" y="1.2" width="27.6" height="34.2" fill="none" stroke="#1d5844" stroke-width="2.4"/>
<path d="M5.5 9.5 H17.8 M5.5 18.2 H12.7 M17 18.2 H24.7 M5.5 26.6 H22.9" stroke="#8eaea0" stroke-width="2.6"/>
</svg>
<svg class="abs" style="left:398px;top:428.7px;width:35.0px;height:28.0px" viewBox="0 0 35 28">
<ellipse cx="8.6" cy="14" rx="7.6" ry="13" fill="#fafafa" stroke="#d5d5d5" stroke-width="1"/>
<ellipse cx="26.4" cy="14" rx="7.6" ry="13" fill="#fafafa" stroke="#d5d5d5" stroke-width="1"/>
<circle cx="6.2" cy="14.6" r="4.3" fill="#2e1606"/><circle cx="23.7" cy="14.6" r="4.3" fill="#2e1606"/>
<circle cx="6.6" cy="13.4" r="1.6" fill="#9a5a1a"/><circle cx="24.1" cy="13.4" r="1.6" fill="#9a5a1a"/>
</svg>
<svg class="abs" style="left:561.5px;top:548.9px;width:38.080000000000005px;height:39.2px;overflow:visible" viewBox="0 0 34 35">
<defs><linearGradient id="pg" x1="0" x2="1"><stop offset="0" stop-color="#e9eef4"/><stop offset="0.5" stop-color="#9aa6b4"/><stop offset="1" stop-color="#5d6774"/></linearGradient></defs>
<g transform="rotate(42 17 17.5)">
<rect x="13.2" y="-3" width="7.6" height="16" rx="3.8" fill="#262a31"/>
<rect x="14.4" y="-1" width="1.8" height="12" rx="0.9" fill="#6f7884"/>
<path d="M13.2 12 H20.8 V24 L18.6 33 H15.4 L13.2 24 Z" fill="url(#pg)"/>
<path d="M15.4 33 H18.6 L17 37.5 Z" fill="#7f8a96"/>
</g></svg>
<svg class="abs" style="left:674.5px;top:430px;width:19.299999999999955px;height:26px;overflow:visible" viewBox="-3 -3 19.299999999999955 26"><path d="M1.6 1.6 L11.699999999999955 10.0 L1.6 18.4" fill="none" stroke="#4a7c6a" stroke-width="3.2" stroke-linecap="round" stroke-linejoin="round"/></svg>
<svg class="abs" style="left:674.5px;top:554px;width:19.299999999999955px;height:26px;overflow:visible" viewBox="-3 -3 19.299999999999955 26"><path d="M1.6 1.6 L11.699999999999955 10.0 L1.6 18.4" fill="none" stroke="#4a7c6a" stroke-width="3.2" stroke-linecap="round" stroke-linejoin="round"/></svg>
<div class="abs" style="left:94.70px;top:715.80px;width:643.30px;height:127.90px;background:#fff;border:1.5px solid #ebe9e5;border-top:5px solid #5f86e0;box-sizing:border-box;border-radius:15px"></div>
<svg class="abs" style="left:128.6px;top:754px;width:32.81px;height:20.265px;overflow:visible" viewBox="0 0 34 21">
<path d="M1.2 19.8 L10.8 10.2 L17.6 16.6 L32.2 1.5" fill="none" stroke="#5f86e0" stroke-width="2.8" stroke-linejoin="miter"/>
<path d="M17.2 1.5 H32.3 V16.8" fill="none" stroke="#5f86e0" stroke-width="2.8"/>
</svg>
<div class="abs" style="left:640.00px;top:772.40px;width:54.00px;height:27.00px;background:#5f86e0;border-radius:14px"></div>
<div class="abs" style="left:670.00px;top:775.20px;width:21.00px;height:21.00px;background:#fff;border-radius:50%"></div>
<div class="abs" style="left:94.50px;top:885.30px;width:643.50px;height:514.70px;background:#fff;border:1.5px solid #ebe9e5;box-sizing:border-box;border-radius:15px"></div>
<svg class="abs" style="left:130px;top:926px;width:24.0px;height:23.0px" viewBox="0 0 24 23">
<rect x="0.3" y="13.6" width="3.7" height="9.4" rx="1.4" fill="#17397a"/>
<rect x="7" y="5.1" width="3.6" height="17.9" rx="1.4" fill="#17397a"/>
<rect x="13.9" y="10.2" width="3.5" height="12.8" rx="1.4" fill="#17397a"/>
<rect x="19.6" y="0" width="3.7" height="23" rx="1.4" fill="#17397a"/>
</svg>
<div class="abs" style="left:129.00px;top:983.00px;width:575.00px;height:2.00px;background-image:linear-gradient(90deg,#d8d8d8 0 9.7px,transparent 9.7px 18.2px);background-size:18.2px 2px"></div>
<svg class="abs" style="left:611.4px;top:1063.5px;width:24.4px;height:24.4px" viewBox="0 0 24 24">
<circle cx="12" cy="12" r="12" fill="#22bf8b"/>
<path d="M12 18 V7.5 M7.6 11.6 L12 7.2 L16.4 11.6" fill="none" stroke="#fff" stroke-width="2.8" stroke-linecap="round" stroke-linejoin="round"/>
</svg>
<div class="abs" style="left:129.00px;top:1169.60px;width:575.00px;height:1.60px;background:#efeeec"></div>
<div class="abs" style="left:129.00px;top:1233.90px;width:575.00px;height:1.60px;background:#efeeec"></div>
<div class="abs" style="left:129.00px;top:1298.70px;width:575.00px;height:1.60px;background:#efeeec"></div>
<div class="abs" style="left:294.40px;top:1180.00px;width:104.90px;height:220.00px;background:#6dab5f;border-radius:12px"></div>
<div class="t" style="left:95.30px;top:190.36px;font-size:38.08px;letter-spacing:-0.687px;color:#2e2e2e;"><b>Welcome home, Arnold!</b></div>
<div class="t" style="left:98.00px;top:246.63px;font-size:39.54px;letter-spacing:-0.785px;color:#4d7f6d;"><b>This Month</b></div>
<div class="t" style="left:93.30px;top:341.48px;font-size:27.91px;letter-spacing:0.928px;color:#8b8b8b;">Notifications</div>
<div class="t" style="left:188.70px;top:428.73px;font-size:31.98px;letter-spacing:-0.059px;color:#2e2e2e;"><b>1</b> flagged deal</div>
<div class="t" style="left:190.00px;top:551.52px;font-size:32.70px;letter-spacing:-0.605px;color:#2e2e2e;">Verify your <b>assigned plan</b></div>
<div class="t" style="left:92.70px;top:661.98px;font-size:28.49px;letter-spacing:0.102px;color:#8b8b8b;">Earnings and Attainment</div>
<div class="t" style="left:181.50px;top:749.59px;font-size:30.96px;letter-spacing:0.244px;color:#2e2e2e;"><b>Forecast earnings</b> this month</div>
<div class="t" style="left:182.50px;top:786.19px;font-size:27.18px;letter-spacing:0.814px;color:#5f86e0;">2 selected deals</div>
<div class="t" style="left:175.00px;top:921.59px;font-size:32.27px;letter-spacing:-1.064px;color:#2e2e2e;"><b>Earnings this month</b></div>
<div class="t" style="left:129.00px;top:1023.79px;font-size:27.18px;letter-spacing:1.561px;color:#8b8b8b;">Total</div>
<div class="t" style="left:127.00px;top:1055.29px;font-size:27.18px;letter-spacing:0.806px;color:#8b8b8b;">Earnings</div>
<div class="t" style="left:369.50px;top:1013.25px;font-size:42.59px;letter-spacing:1.590px;color:#2e2e2e;-webkit-text-stroke:0.7px #2c2c2c;">$4,680</div>
<div class="t" style="left:543.80px;top:1013.25px;font-size:42.59px;letter-spacing:0.748px;color:#5f86e0;">+$2,010</div>
<div class="t" style="left:648.52px;top:1061.38px;font-size:28.49px;letter-spacing:-0.997px;color:#22bf8b;transform:scaleX(0.9782);transform-origin:0 0;">50%</div>
<div class="t" style="left:129.00px;top:1105.39px;font-size:27.18px;letter-spacing:0.658px;color:#8b8b8b;">Total Closed/Won Deals</div>
<div class="t" style="left:573.00px;top:1096.31px;font-size:41.57px;letter-spacing:0.000px;color:#2e2e2e;-webkit-text-stroke:0.6px #2c2c2c;">6</div>
<div class="t" style="left:634.00px;top:1096.31px;font-size:41.57px;letter-spacing:1.728px;color:#5f86e0;">+2</div>
</div>
</body></html>
